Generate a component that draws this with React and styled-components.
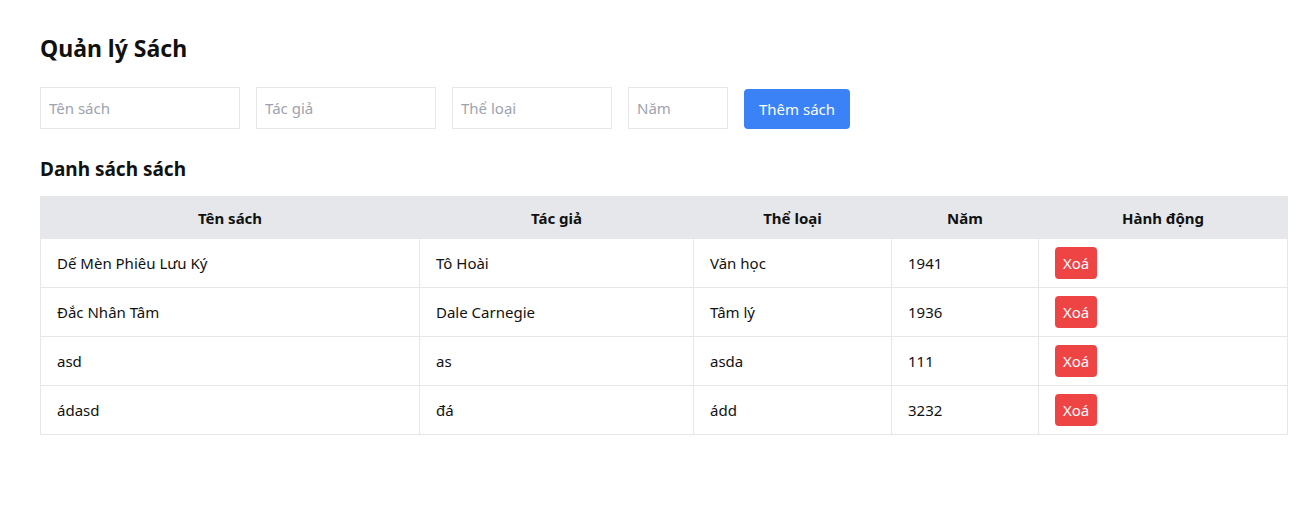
import React from 'react';
import styled, { createGlobalStyle } from 'styled-components';

const GlobalStyle = createGlobalStyle`
  body {
    margin: 0;
    background: #ffffff;
    font-family: "Noto Sans", "Open Sans", sans-serif;
    color: #111111;
  }
`;

const books = [
  { title: 'Dế Mèn Phiêu Lưu Ký', author: 'Tô Hoài', genre: 'Văn học', year: 1941 },
  { title: 'Đắc Nhân Tâm', author: 'Dale Carnegie', genre: 'Tâm lý', year: 1936 },
  { title: 'asd', author: 'as', genre: 'asda', year: 111 },
  { title: 'ádasd', author: 'đá', genre: 'ádd', year: 3232 },
];

const App = () => {
  return (
    <Page>
      <GlobalStyle />
      <Title>Quản lý Sách</Title>
      <Form>
        <Input placeholder="Tên sách" $w={200} />
        <Input placeholder="Tác giả" $w={180} />
        <Input placeholder="Thể loại" $w={160} />
        <Input placeholder="Năm" $w={100} />
        <AddButton>Thêm sách</AddButton>
      </Form>
      <SubTitle>Danh sách sách</SubTitle>
      <Table>
        <colgroup>
          <col style={{ width: 379 }} />
          <col style={{ width: 274 }} />
          <col style={{ width: 198 }} />
          <col style={{ width: 147 }} />
          <col />
        </colgroup>
        <thead>
          <tr>
            <Th>Tên sách</Th>
            <Th>Tác giả</Th>
            <Th>Thể loại</Th>
            <Th>Năm</Th>
            <Th>Hành động</Th>
          </tr>
        </thead>
        <tbody>
          {books.map((b, i) => (
            <tr key={i}>
              <Td>{b.title}</Td>
              <Td>{b.author}</Td>
              <Td>{b.genre}</Td>
              <Td>{b.year}</Td>
              <Td>
                <DeleteButton>Xoá</DeleteButton>
              </Td>
            </tr>
          ))}
        </tbody>
      </Table>
    </Page>
  );
};

const Page = styled.div`
  padding: 32px 25px 40px 40px;
`;

const Title = styled.h1`
  margin: 0;
  font-size: 23px;
  font-weight: 700;
  line-height: 32px;
`;

const Form = styled.div`
  display: flex;
  align-items: center;
  gap: 16px;
  margin-top: 23px;
`;

const Input = styled.input`
  box-sizing: border-box;
  width: ${(p) => p.$w}px;
  height: 42px;
  padding: 0 8px;
  border: 1px solid #e5e7eb;
  border-radius: 0;
  font-family: inherit;
  font-size: 15px;
  color: #111;
  outline: none;
  &::placeholder {
    color: #9ca3af;
  }
`;

const AddButton = styled.button`
  height: 40px;
  margin-top: 2px;
  padding: 0 15px;
  border: none;
  border-radius: 4px;
  background: #3b82f6;
  color: #ffffff;
  font-family: inherit;
  font-size: 15px;
  cursor: pointer;
`;

const SubTitle = styled.h2`
  margin: 26px 0 13px;
  font-size: 19px;
  font-weight: 700;
  line-height: 28px;
`;

const Table = styled.table`
  width: 100%;
  border-collapse: collapse;
  table-layout: fixed;
  font-size: 15px;
`;

const Th = styled.th`
  background: #e5e7eb;
  padding: 8px 16px;
  height: 42px;
  box-sizing: border-box;
  font-weight: 700;
  text-align: center;
  border: 1px solid #e5e7eb;
`;

const Td = styled.td`
  height: 49px;
  box-sizing: border-box;
  padding: 8px 16px;
  border: 1px solid #e5e7eb;
  text-align: left;
  vertical-align: middle;
`;

const DeleteButton = styled.button`
  display: block;
  height: 32px;
  padding: 0 8px;
  border: none;
  border-radius: 4px;
  background: #ef4444;
  color: #ffffff;
  font-family: inherit;
  font-size: 15px;
  cursor: pointer;
`;

export default App;
